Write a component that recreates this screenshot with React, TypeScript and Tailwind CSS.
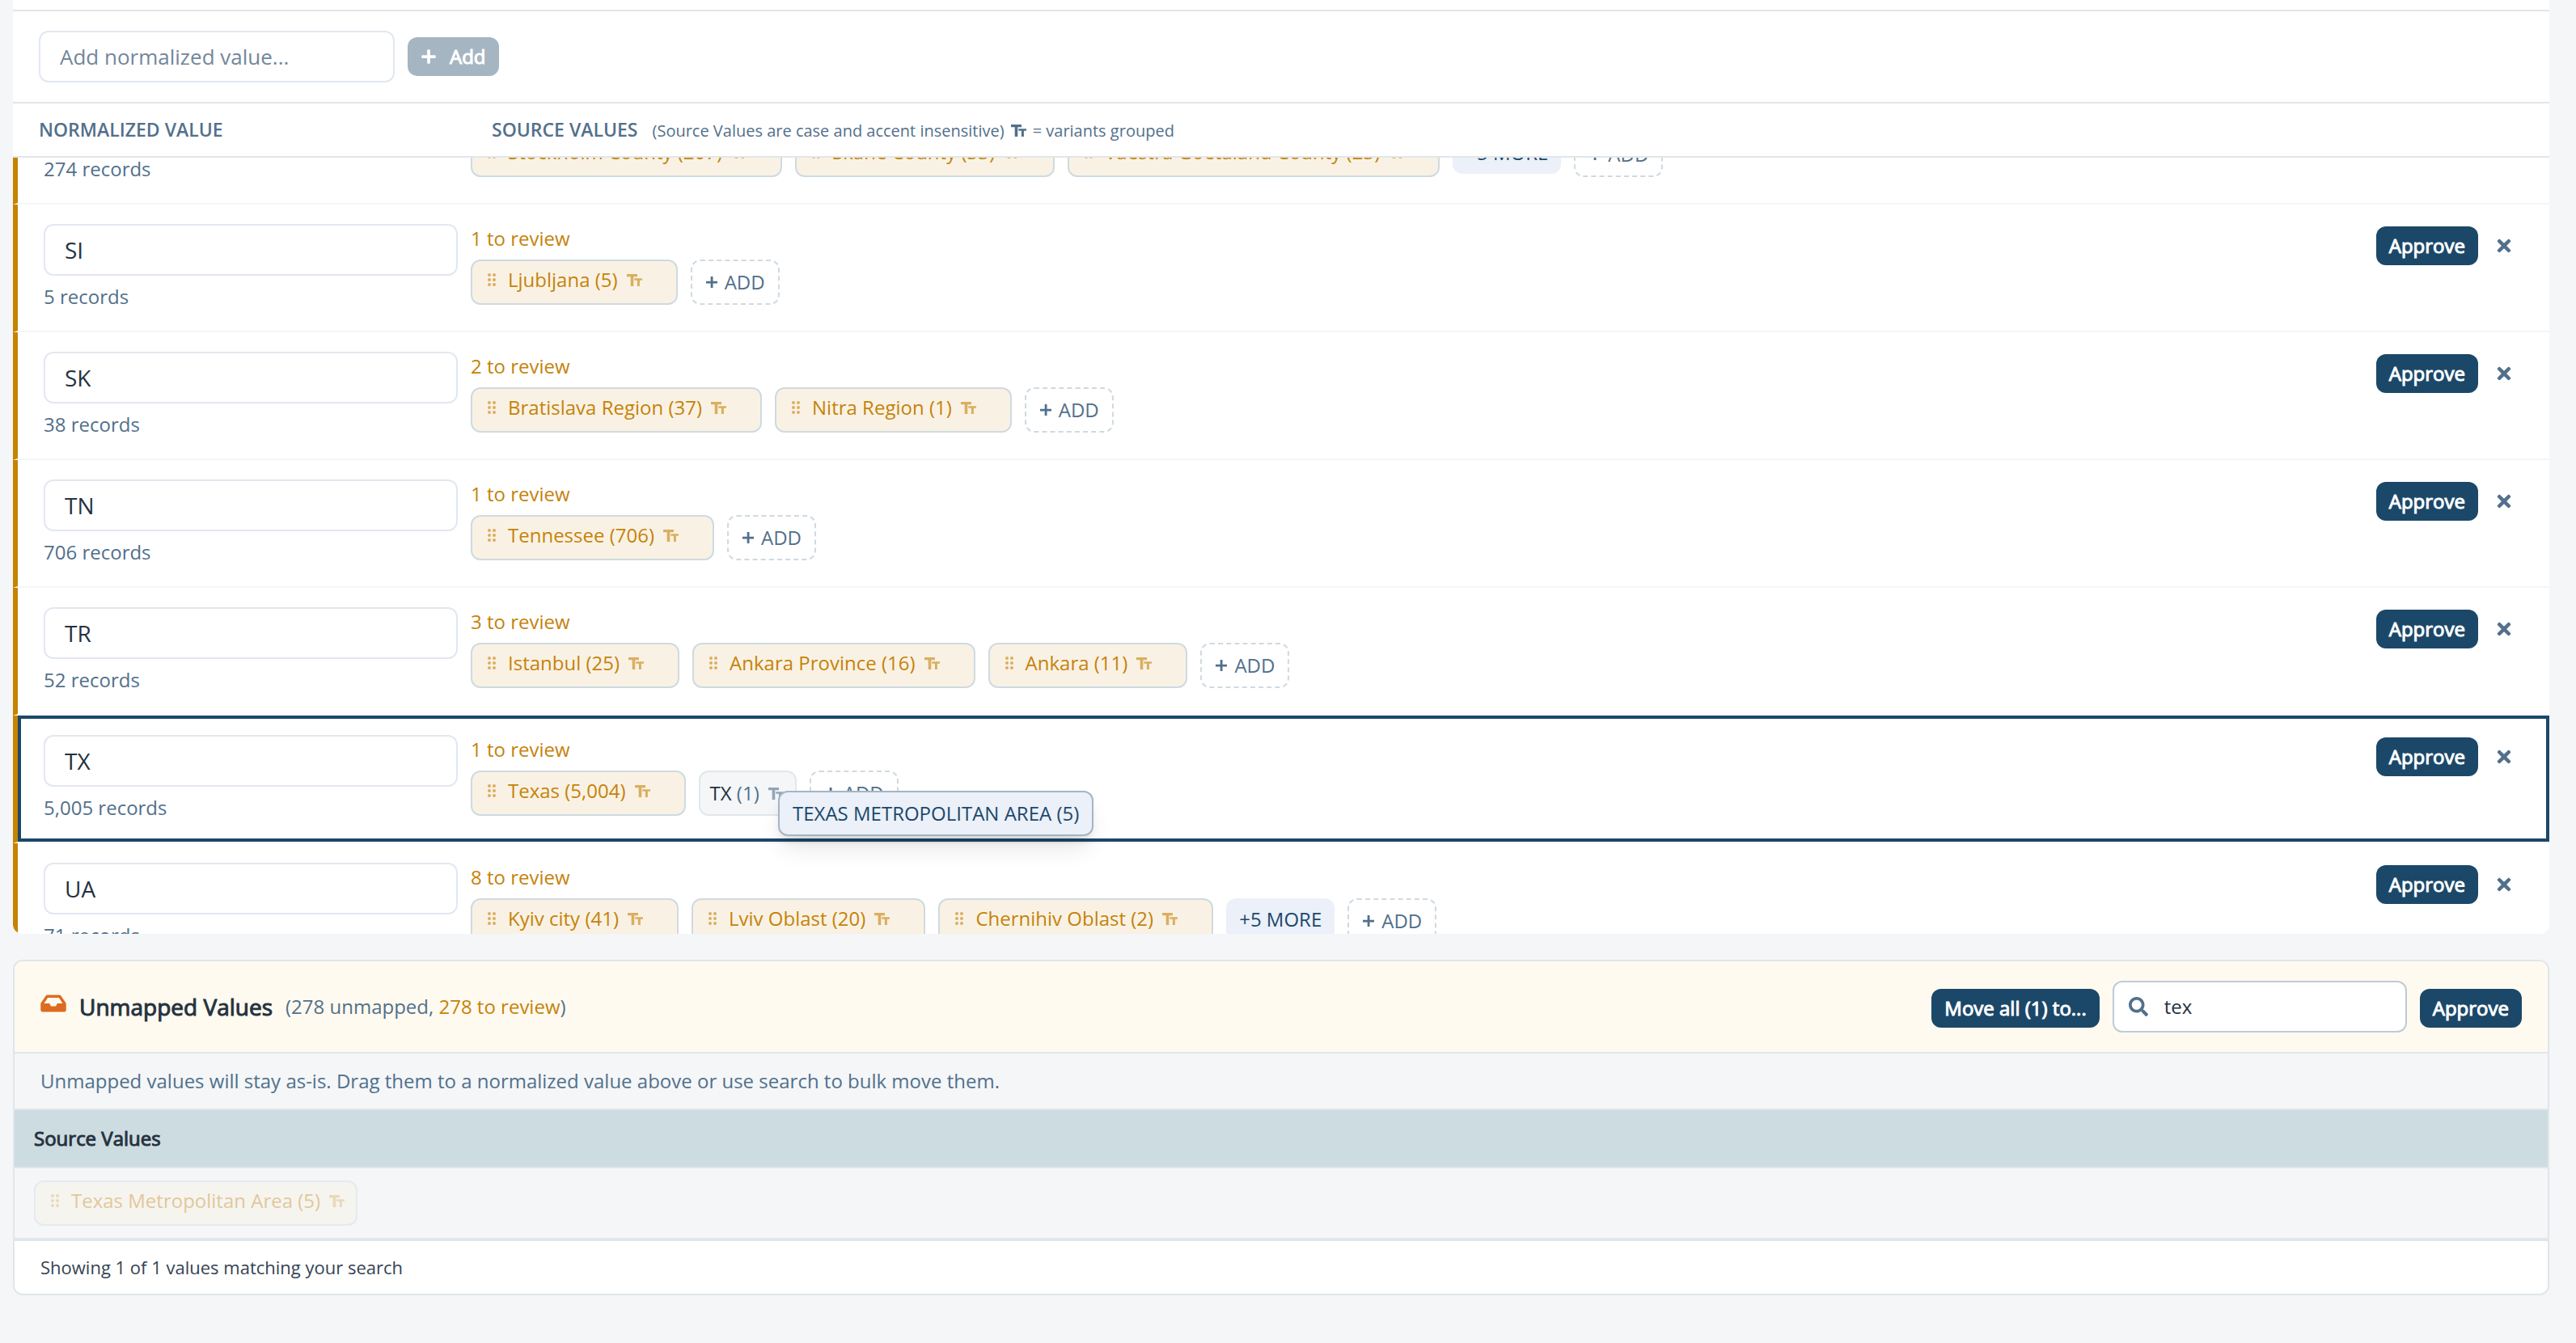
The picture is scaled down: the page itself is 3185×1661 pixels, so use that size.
import { useLayoutEffect, useRef, useState } from 'react';
import { clsx } from 'clsx';
import { FaInbox, FaPlus, FaSearch, FaTimes } from 'react-icons/fa';

interface SourceValue {
    label: string;
    count: string;
    reviewed?: boolean;
}

interface NormalizedRow {
    value: string;
    records: string;
    toReview: number;
    sources: SourceValue[];
    more?: number;
    isDropTarget?: boolean;
}

const initialRows: NormalizedRow[] = [
    {
        value: 'SE',
        records: '274',
        toReview: 8,
        sources: [
            { label: 'Stockholm County', count: '207' },
            { label: 'Skane County', count: '33' },
            { label: 'Vaestra Goetaland County', count: '23' },
        ],
        more: 5,
    },
    { value: 'SI', records: '5', toReview: 1, sources: [{ label: 'Ljubljana', count: '5' }] },
    {
        value: 'SK',
        records: '38',
        toReview: 2,
        sources: [
            { label: 'Bratislava Region', count: '37' },
            { label: 'Nitra Region', count: '1' },
        ],
    },
    { value: 'TN', records: '706', toReview: 1, sources: [{ label: 'Tennessee', count: '706' }] },
    {
        value: 'TR',
        records: '52',
        toReview: 3,
        sources: [
            { label: 'Istanbul', count: '25' },
            { label: 'Ankara Province', count: '16' },
            { label: 'Ankara', count: '11' },
        ],
    },
    {
        value: 'TX',
        records: '5,005',
        toReview: 1,
        sources: [
            { label: 'Texas', count: '5,004' },
            { label: 'TX', count: '1', reviewed: true },
        ],
        isDropTarget: true,
    },
    {
        value: 'UA',
        records: '71',
        toReview: 8,
        sources: [
            { label: 'Kyiv city', count: '41' },
            { label: 'Lviv Oblast', count: '20' },
            { label: 'Chernihiv Oblast', count: '2' },
        ],
        more: 5,
    },
];

function VariantsIcon({ className }: { className?: string }) {
    return (
        <svg viewBox="0 0 19 15" className={clsx('h-[15px] w-[19px] shrink-0', className)} fill="currentColor" aria-hidden="true">
            <path d="M0 0h13v3.2H8.3V15H4.7V3.2H0z" />
            <path d="M9.3 5.2H19v2.6h-3.1V15h-3V7.8H9.3z" />
        </svg>
    );
}

function GripIcon({ className }: { className?: string }) {
    return (
        <svg viewBox="0 0 10 16" className={clsx('h-4 w-[10px] shrink-0', className)} fill="currentColor" aria-hidden="true">
            {[2, 8, 14].map(y => (
                <g key={y}>
                    <circle cx="2" cy={y} r="2" />
                    <circle cx="8" cy={y} r="2" />
                </g>
            ))}
        </svg>
    );
}

function SmallPlusIcon() {
    return (
        <svg viewBox="0 0 16 16" className="size-4 shrink-0" fill="currentColor" aria-hidden="true">
            <path d="M6.7 1h2.8v5.7H15v2.7H9.5V15H6.7V9.4H1V6.7h5.7z" />
        </svg>
    );
}

function PrimaryButton({ children }: { children: string }) {
    return (
        <button type="button" className="h-12 rounded-xl bg-[#1b4869] px-4 text-2xl text-white [-webkit-text-stroke:1px]">
            {children}
        </button>
    );
}

function ReviewChip({ source, removable = true }: { source: SourceValue; removable?: boolean }) {
    return (
        <div
            className={clsx(
                'flex h-14 items-center rounded-xl border-2 border-[#cfdae1] bg-[#f9f2e4] pb-[6px] pl-[19px] text-[#c6820a]',
                removable ? 'pr-[42px]' : 'pr-[14px]',
            )}
        >
            <GripIcon className="mr-[15px] opacity-60" />
            <span className="whitespace-nowrap">{source.label} ({source.count})</span>
            <VariantsIcon className="ml-[11px] opacity-60" />
        </div>
    );
}

function ReviewedChip({ source }: { source: SourceValue }) {
    return (
        <div className="flex h-14 items-center rounded-xl border-2 border-[#e1e7eb] bg-[#f4f6f8] pr-[14px] pl-3 text-[#26323f]">
            <span className="whitespace-nowrap">
                {source.label} <span className="text-[#52708b]">({source.count})</span>
            </span>
            <VariantsIcon className="ml-[11px] text-[#52708b] opacity-60" />
        </div>
    );
}

function MappingRow({ row, onRename }: { row: NormalizedRow; onRename: (value: string) => void }) {
    return (
        <div
            className={clsx(
                'flex items-start gap-4 border-b-2 border-l-6 border-b-[#f4f6f8] border-l-[#c58300] py-6 pr-8 pl-8',
                row.isDropTarget && 'shadow-[inset_0_0_0_4px_#1b4869]',
            )}
        >
            <div className="w-[512px] shrink-0">
                <input
                    type="text"
                    aria-label="Normalized value"
                    value={row.value}
                    onChange={e => onRename(e.target.value)}
                    className="block h-16 w-full rounded-xl border-2 border-[#e2e8f0] bg-white px-6 text-[28px] text-[#26323f]"
                />
                <p className="mt-2 text-2xl leading-9 text-[#52708b]">{row.records} records</p>
            </div>
            <div className="min-w-0 flex-1 text-2xl">
                <p className="leading-9 text-[#c6820a]">{row.toReview} to review</p>
                <div className="mt-2 flex items-start gap-4">
                    {row.sources.map(source =>
                        source.reviewed
                            ? <ReviewedChip key={source.label} source={source} />
                            : <ReviewChip key={source.label} source={source} />
                    )}
                    {row.more && (
                        <button type="button" className="h-[52px] rounded-xl bg-[#ebf0f9] px-4 whitespace-nowrap text-[#1b4869]">
                            +{row.more} MORE
                        </button>
                    )}
                    <button
                        type="button"
                        className="flex h-14 items-center gap-2 rounded-xl border-2 border-dashed border-[#cfdae1] px-4 text-[#52708b]"
                    >
                        <SmallPlusIcon />
                        ADD
                    </button>
                </div>
            </div>
            <div className="flex items-center gap-2 pt-[3px]">
                <PrimaryButton>Approve</PrimaryButton>
                <button type="button" aria-label="Remove" className="flex size-12 items-center justify-center text-[#52708b]">
                    <FaTimes className="size-6" />
                </button>
            </div>
        </div>
    );
}

export default function App() {
    const [rows, setRows] = useState(initialRows);
    const [newValue, setNewValue] = useState('');
    const [search, setSearch] = useState('tex');
    const listRef = useRef<HTMLDivElement>(null);

    useLayoutEffect(() => {
        if (listRef.current) listRef.current.scrollTop = 100;
    }, []);

    const handleRename = (index: number, value: string) => {
        setRows(rows.map((row, i) => (i === index ? { ...row, value } : row)));
    };

    return (
        <div className="min-h-screen bg-[#f4f6f8] pr-[33px] pb-14 pl-4 font-['Open_Sans',sans-serif] text-[#26323f]">
            <section className="overflow-hidden rounded-b-xl bg-white">
                <div className="mt-3 flex items-center gap-4 border-y-2 border-[#e0e6ea] px-8 py-6">
                    <input
                        type="text"
                        aria-label="Add normalized value"
                        placeholder="Add normalized value..."
                        value={newValue}
                        onChange={e => setNewValue(e.target.value)}
                        className="h-16 w-[440px] rounded-xl border-2 border-[#e2e8f0] bg-white px-6 text-[26px] placeholder:text-[#73869b]"
                    />
                    <button
                        type="button"
                        disabled
                        className="flex h-12 items-center gap-4 rounded-xl bg-[#a5b5c2] px-4 text-2xl text-white [-webkit-text-stroke:1px]"
                    >
                        <FaPlus className="size-5" />
                        Add
                    </button>
                </div>
                <div className="flex h-[67px] items-center border-b-2 border-[#e0e6ea] px-8 text-[#52708b]">
                    <h2 className="w-[560px] shrink-0 text-[23px] font-semibold">NORMALIZED VALUE</h2>
                    <div className="flex items-baseline">
                        <h2 className="text-[23px] font-semibold">SOURCE VALUES</h2>
                        <p className="ml-[18px] text-xl">(Source Values are case and accent insensitive)</p>
                        <VariantsIcon className="mx-2" />
                        <p className="text-xl">= variants grouped</p>
                    </div>
                </div>
                <div ref={listRef} className="max-h-[960px] overflow-y-auto [scrollbar-width:none]">
                    {rows.map((row, i) => (
                        <MappingRow key={i} row={row} onRename={value => handleRename(i, value)} />
                    ))}
                </div>
            </section>

            <section className="mt-8 overflow-hidden rounded-xl border-2 border-[#e0e6ea] bg-white">
                <header className="flex items-center justify-between border-b-2 border-[#e0e6ea] bg-[#fefaef] px-8 py-6">
                    <div className="flex items-center gap-4">
                        <FaInbox className="mb-2 h-7 w-8 text-[#dd6b20]" />
                        <h2 className="text-[28px] [-webkit-text-stroke:1px]">Unmapped Values</h2>
                        <p className="text-2xl text-[#52708b]">
                            (278 unmapped, <span className="text-[#c6820a]">278 to review</span>)
                        </p>
                    </div>
                    <div className="flex items-center gap-4">
                        <div className="pt-1">
                            <PrimaryButton>Move all (1) to...</PrimaryButton>
                        </div>
                        <label className="flex h-16 w-[364px] items-center gap-5 rounded-xl border-2 border-[#becbd7] bg-white px-[18px]">
                            <FaSearch className="size-6 shrink-0 text-[#52708b]" />
                            <input
                                type="text"
                                aria-label="Search unmapped values"
                                value={search}
                                onChange={e => setSearch(e.target.value)}
                                className="w-full min-w-0 bg-transparent text-2xl outline-none"
                            />
                        </label>
                        <div className="pt-1">
                            <PrimaryButton>Approve</PrimaryButton>
                        </div>
                    </div>
                </header>
                <p className="flex h-[70px] items-center border-b-2 border-[#e0e6ea] bg-[#f4f6f8] px-8 text-2xl text-[#52708b]">
                    Unmapped values will stay as-is. Drag them to a normalized value above or use search to bulk move them.
                </p>
                <table className="w-full border-separate border-spacing-0 text-left text-2xl">
                    <thead>
                        <tr>
                            <th className="h-[72px] border-b-2 border-[#e0e6ea] bg-[#cddce1] px-6 font-normal [-webkit-text-stroke:1px]">
                                Source Values
                            </th>
                        </tr>
                    </thead>
                    <tbody>
                        <tr>
                            <td className="h-[88px] border-b-2 border-[#e0e6ea] bg-[#f4f6f8] px-6">
                                <div className="flex opacity-40">
                                    <ReviewChip source={{ label: 'Texas Metropolitan Area', count: '5' }} removable={false} />
                                </div>
                            </td>
                        </tr>
                    </tbody>
                </table>
                <p className="flex h-[67px] items-center border-t-2 border-[#e0e6ea] px-8 text-[22px] text-[#364353]">
                    Showing 1 of 1 values matching your search
                </p>
            </section>

            <div className="absolute top-[978px] left-[962px] flex h-14 items-center rounded-xl border-2 border-[#a3b6c5] bg-[#ebf0f9] px-4 text-2xl whitespace-nowrap text-[#1b4869] shadow-[0_20px_30px_-6px_rgba(0,0,0,0.1),0_8px_12px_-4px_rgba(0,0,0,0.1)]">
                TEXAS METROPOLITAN AREA (5)
            </div>
        </div>
    );
}
